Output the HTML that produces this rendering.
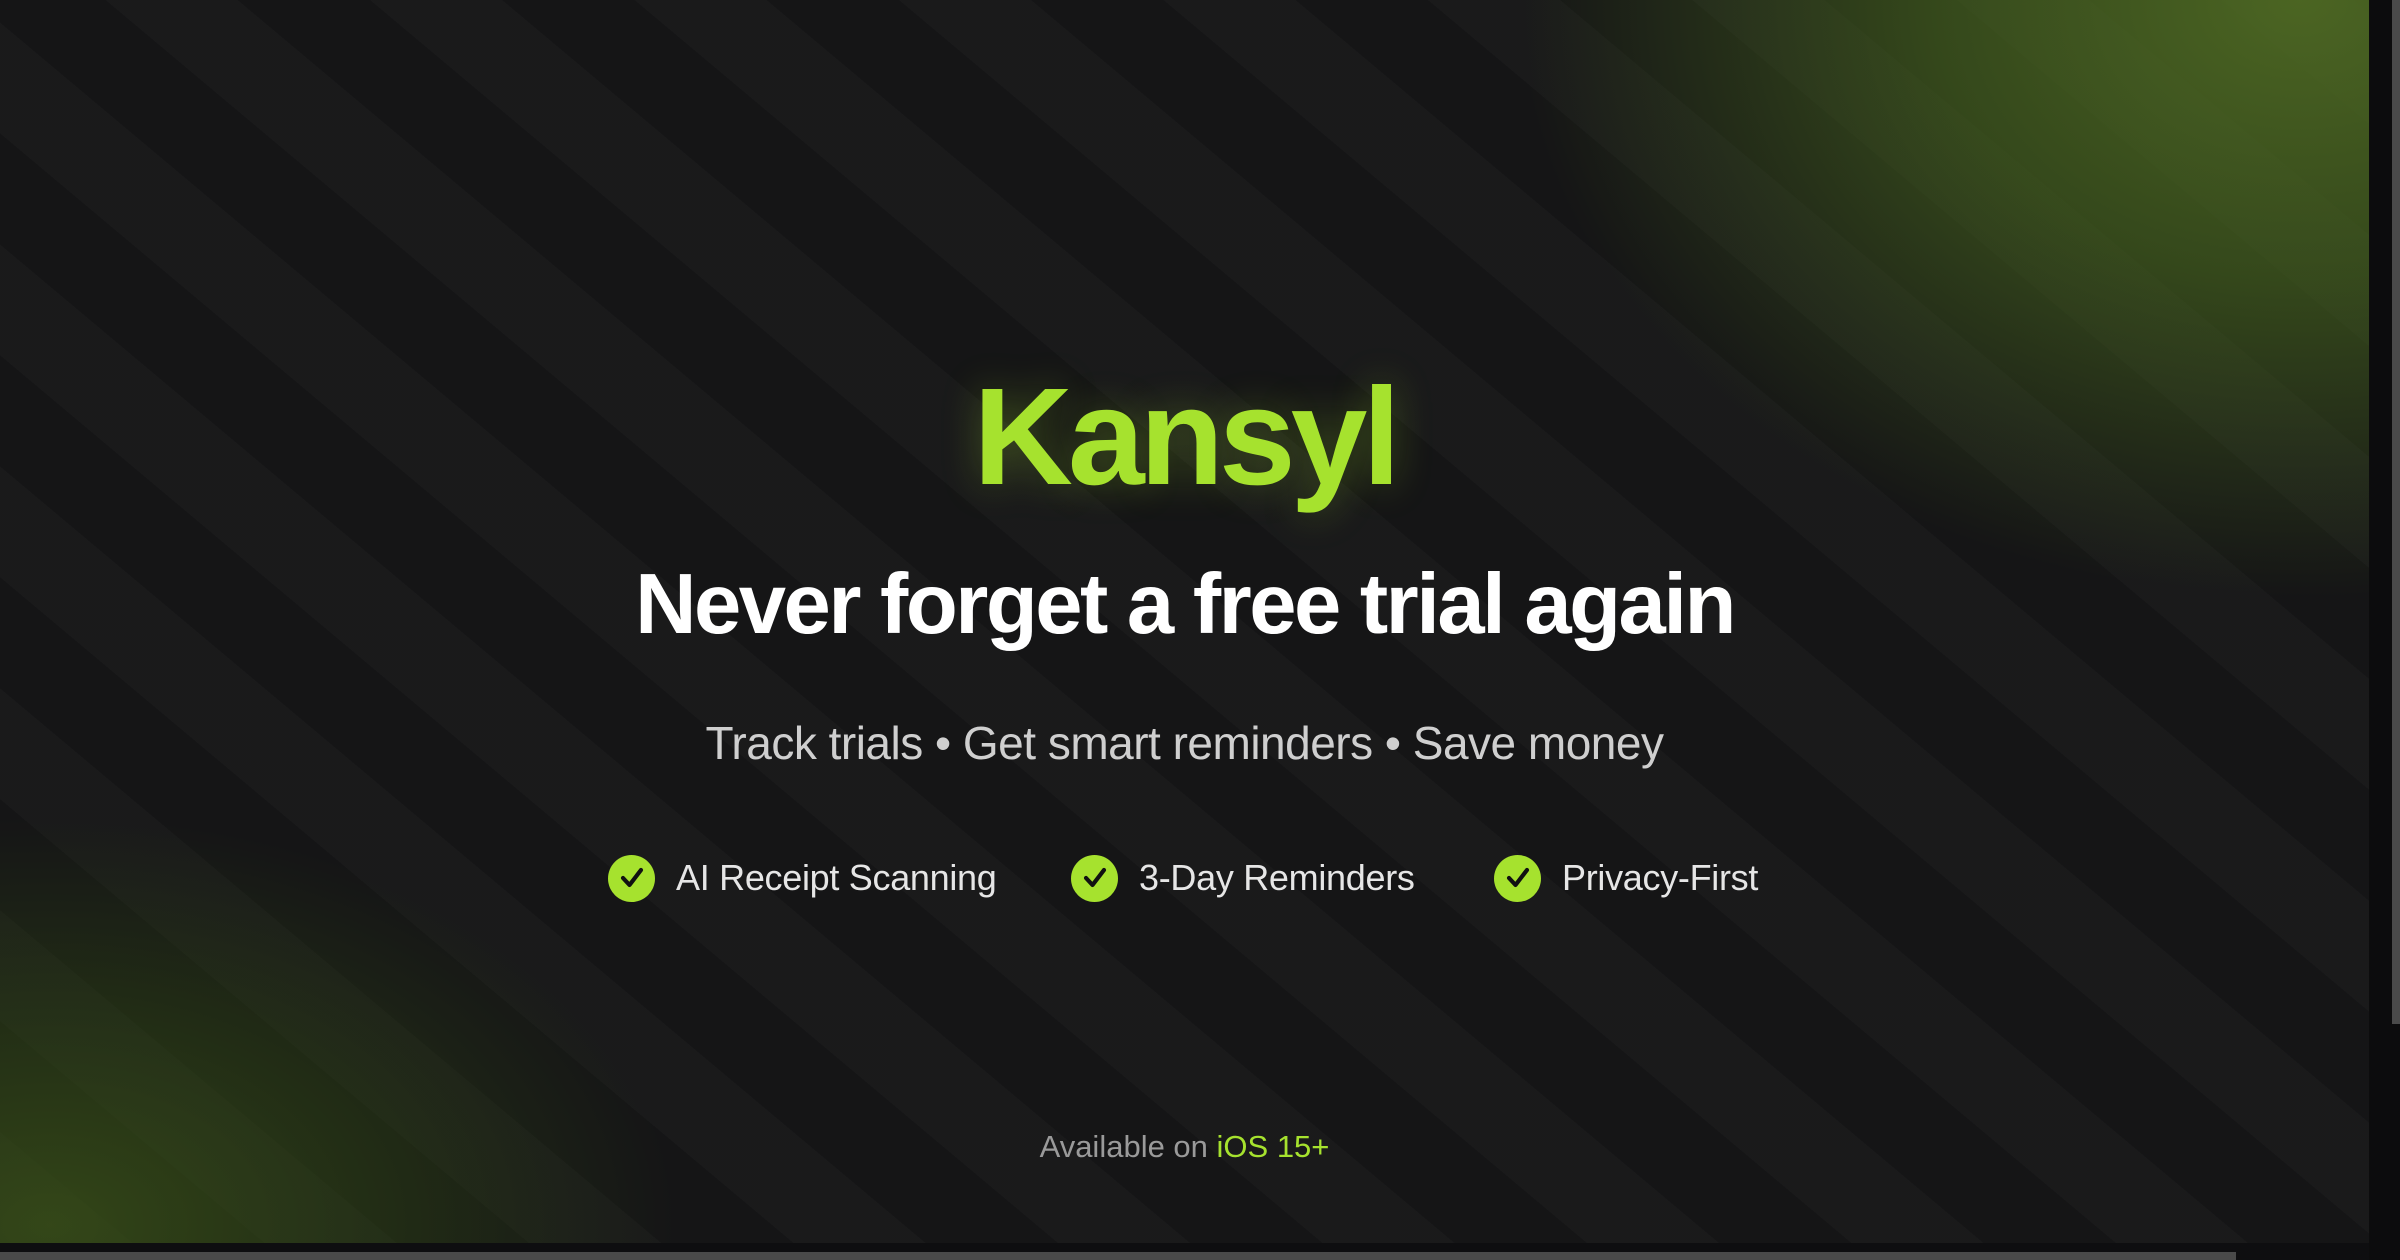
<!DOCTYPE html>
<html><head><meta charset="utf-8"><style>
html,body{margin:0;padding:0;width:2400px;height:1260px;overflow:hidden;background:#0e0e10;font-family:"Liberation Sans",sans-serif}
#main{position:absolute;left:0;top:0;width:2369px;height:1243px;overflow:hidden;background:#161617}
.stripes{position:absolute;inset:0;background:repeating-linear-gradient(40deg,rgba(255,255,255,0.015) 0 85px,rgba(0,0,0,0.06) 85px 170px)}
.g1{position:absolute;left:1450px;top:-650px;width:1700px;height:1300px;background:radial-gradient(ellipse at center,rgba(78,105,35,0.95) 0%,rgba(70,100,30,0.65) 30%,rgba(40,60,20,0) 65%)}
.g2{position:absolute;left:-600px;top:800px;width:1300px;height:850px;background:radial-gradient(ellipse at center,rgba(58,82,24,0.8) 0%,rgba(50,75,20,0.45) 35%,rgba(30,45,15,0) 68%)}
.c{position:absolute;left:0;width:2369px;text-align:center}
h1{margin:0;color:#a6e22e;font-weight:bold;font-size:138px;letter-spacing:-5px;top:358px;text-shadow:0 0 40px rgba(166,226,46,0.3)}
h2{margin:0;color:#fff;font-weight:bold;font-size:85px;letter-spacing:-2.5px;top:556px}
.sub{color:#cfcfcf;font-size:46px;top:716px;letter-spacing:-0.5px}
.feat{position:absolute;top:853px;height:50px;display:flex;align-items:center;color:#e6e6e6;font-size:36px;letter-spacing:-0.3px}
.chk{width:47px;height:47px;border-radius:50%;background:#a6e22e;margin-right:21px;display:flex;align-items:center;justify-content:center}
.foot{color:#9a9a9a;font-size:31px;top:1129px}
.foot span{color:#a6e22e}
#vtrack{position:absolute;left:2369px;top:0;width:31px;height:1260px;background:#0c0c0d}
#vthumb{position:absolute;left:2392px;top:0;width:8px;height:1024px;background:#4a4a4a}
#htrack{position:absolute;left:0;top:1243px;width:2369px;height:17px;background:#0e0e10}
#hthumb{position:absolute;left:0;top:1252px;width:2236px;height:8px;background:#4a4a4a}
</style></head><body>
<div id="main">
<div class="stripes"></div>
<div class="g1"></div><div class="g2"></div>
<h1 class="c">Kansyl</h1>
<h2 class="c">Never forget a free trial again</h2>
<div class="c sub">Track trials • Get smart reminders • Save money</div>
<div class="feat" style="left:608px"><div class="chk"><svg width="28" height="28" viewBox="0 0 28 28"><path d="M5 14 L11.5 21 L23 6" fill="none" stroke="#111" stroke-width="4.2" stroke-linecap="round" stroke-linejoin="round"/></svg></div>AI Receipt Scanning</div>
<div class="feat" style="left:1071px"><div class="chk"><svg width="28" height="28" viewBox="0 0 28 28"><path d="M5 14 L11.5 21 L23 6" fill="none" stroke="#111" stroke-width="4.2" stroke-linecap="round" stroke-linejoin="round"/></svg></div>3-Day Reminders</div>
<div class="feat" style="left:1494px"><div class="chk"><svg width="28" height="28" viewBox="0 0 28 28"><path d="M5 14 L11.5 21 L23 6" fill="none" stroke="#111" stroke-width="4.2" stroke-linecap="round" stroke-linejoin="round"/></svg></div>Privacy-First</div>
<div class="c foot">Available on <span>iOS 15+</span></div>
</div>
<div id="vtrack"></div><div id="vthumb"></div>
<div id="htrack"></div><div id="hthumb"></div>
</body></html>
